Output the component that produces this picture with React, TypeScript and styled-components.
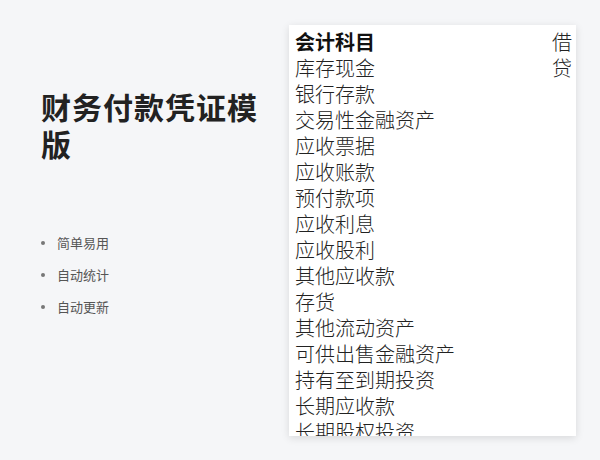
import React from "react";
import styled, { createGlobalStyle } from "styled-components";

const Global = createGlobalStyle`
  html, body { margin: 0; padding: 0; background: #f5f6f8; }
  body { font-family: "Noto Sans CJK SC", "Noto Sans", sans-serif; }
`;

const Page = styled.div`
  display: flex;
  width: 600px;
  height: 460px;
  background: #f5f6f8;
  overflow: hidden;
`;

const Intro = styled.div`
  width: 248px;
  padding: 88px 0 0 41px;
  display: flex;
  flex-direction: column;
`;

const Title = styled.h1`
  margin: 0;
  max-width: 232px;
  font-size: 30px;
  line-height: 37px;
  font-weight: 700;
  color: #222;
  letter-spacing: 1px;
`;

const Features = styled.ul`
  list-style: none;
  margin: 71px 0 0 0;
  padding: 0;
  display: flex;
  flex-direction: column;
  gap: 12px;
`;

const Feature = styled.li`
  display: flex;
  align-items: center;
  font-size: 13px;
  line-height: 20px;
  color: #555;
  &::before {
    content: "";
    width: 4px;
    height: 4px;
    border-radius: 50%;
    background: #777;
    margin: 0 12px 0 0;
  }
`;

const Sheet = styled.div`
  margin-top: 25px;
  width: 287px;
  height: 411px;
  background: #fff;
  box-shadow: 0 2px 8px rgba(0, 0, 0, 0.12);
  overflow: hidden;
  padding: 4px 4px 0 6px;
  box-sizing: border-box;
  display: grid;
  grid-template-columns: 1fr auto;
  grid-auto-rows: 26px;
  align-content: start;
`;

const Cell = styled.div<{ $head?: boolean }>`
  font-size: 20px;
  line-height: 26px;
  white-space: nowrap;
  color: ${(p) => (p.$head ? "#111" : "#222")};
  font-weight: ${(p) => (p.$head ? 700 : 300)};
`;

const SideCell = styled(Cell)`
  font-weight: 300;
  text-align: right;
`;

const rows: [string, string][] = [
  ["会计科目", "借"],
  ["库存现金", "贷"],
  ["银行存款", ""],
  ["交易性金融资产", ""],
  ["应收票据", ""],
  ["应收账款", ""],
  ["预付款项", ""],
  ["应收利息", ""],
  ["应收股利", ""],
  ["其他应收款", ""],
  ["存货", ""],
  ["其他流动资产", ""],
  ["可供出售金融资产", ""],
  ["持有至到期投资", ""],
  ["长期应收款", ""],
  ["长期股权投资", ""],
];

export default function App() {
  return (
    <>
      <Global />
      <Page>
        <Intro>
          <Title>财务付款凭证模版</Title>
          <Features>
            <Feature>简单易用</Feature>
            <Feature>自动统计</Feature>
            <Feature>自动更新</Feature>
          </Features>
        </Intro>
        <Sheet>
          {rows.map(([name, dc], i) => (
            <React.Fragment key={name}>
              <Cell $head={i === 0}>{name}</Cell>
              <SideCell>{dc}</SideCell>
            </React.Fragment>
          ))}
        </Sheet>
      </Page>
    </>
  );
}
